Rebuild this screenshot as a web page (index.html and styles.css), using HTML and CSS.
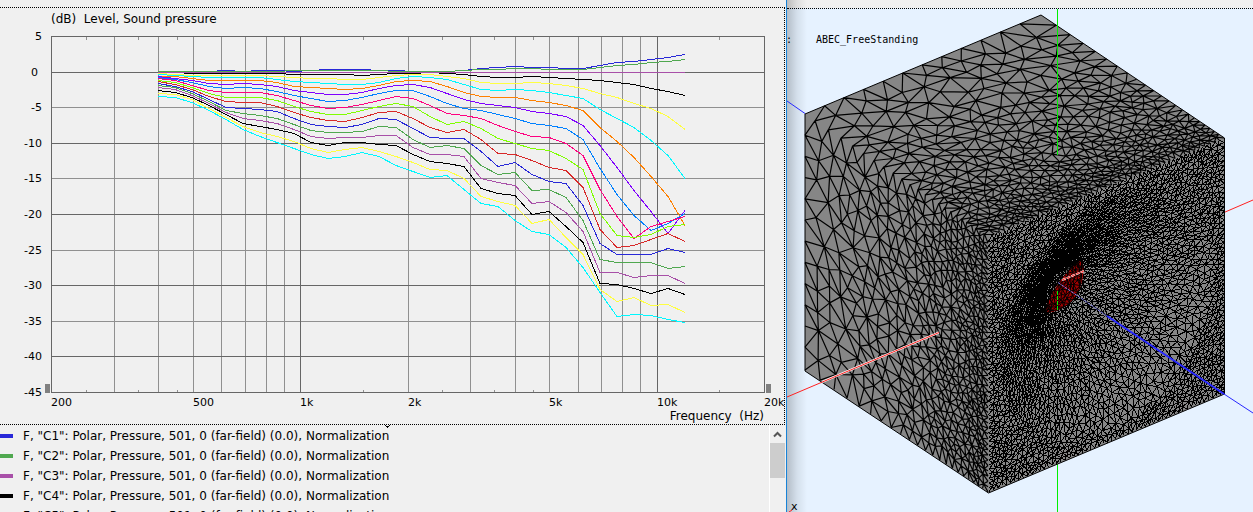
FILE: index.html
```html
<!DOCTYPE html>
<html lang="en">
<head>
<meta charset="utf-8">
<title>Level, Sound pressure</title>
<link rel="stylesheet" href="styles.css">
</head>
<body>
<main class="workspace">
  <section class="spectrum" aria-label="Level, Sound pressure">
    <div class="chart-panel">
      <svg class="chart" viewBox="0 8 784 416" role="img" aria-label="Sound pressure level over frequency">
        <g id="grid" class="grid"></g>
        <g id="curves" class="curves"></g>
        <rect class="handle" x="45" y="384" width="5" height="9"/>
        <rect class="handle" x="766" y="384" width="5" height="9"/>
        <text class="title" x="51" y="23" xml:space="preserve">(dB)  Level, Sound pressure</text>
        <g id="labels"></g>
        <text class="title end" x="764" y="420" xml:space="preserve">Frequency  (Hz)</text>
      </svg>
    </div>
    <div class="legend">
      <ul class="legend-list">
        <li><span class="swatch blue"></span>F, "C1": Polar, Pressure, 501, 0 (far-field) (0.0), Normalization</li>
        <li><span class="swatch green"></span>F, "C2": Polar, Pressure, 501, 0 (far-field) (0.0), Normalization</li>
        <li><span class="swatch purple"></span>F, "C3": Polar, Pressure, 501, 0 (far-field) (0.0), Normalization</li>
        <li><span class="swatch black"></span>F, "C4": Polar, Pressure, 501, 0 (far-field) (0.0), Normalization</li>
        <li><span class="swatch yellow"></span>F, "C5": Polar, Pressure, 501, 0 (far-field) (0.0), Normalization</li>
      </ul>
      <div class="scrollbar">
        <button class="scroll-up" type="button" aria-label="Scroll up">
          <svg width="9" height="7" viewBox="0 0 9 7"><path d="M1 5.5 4.5 2 8 5.5" fill="none" stroke="#555" stroke-width="2"/></svg>
        </button>
        <div class="thumb"></div>
      </div>
      <svg class="splitter-mark" width="5" height="3" viewBox="0 0 5 3"><path d="M0 0h1v1h3V0h1v1H4v1H3v1H2V2H1V1H0z"/></svg>
    </div>
  </section>
  <section class="viewport" aria-label="ABEC_FreeStanding">
    <svg class="scene" viewBox="787 9 466 503" preserveAspectRatio="xMinYMin meet" role="img" aria-label="Boundary element mesh">
      <path class="axis-z" d="M787 101 805 113.500"/>
      <path class="axis-x" d="M1224 212.500 1253 200"/>
      <path class="axis-y" d="M1057.500 464V512"/>
      <path class="solid" d="M1041 15 1224.500 138V394L988.500 493 805 371V114Z"/>
      <g id="mesh" class="mesh"></g>
      <path class="driver" d="M1045 313C1048 294 1066 270 1082 259 1087 280 1078 310 1045 313Z"/>
      <path id="driver-mesh" class="driver-mesh"/>
      <path class="outline" d="M1041 15 1224.500 138V394L988.500 493 805 371V114Z"/>
      <path class="axis-glow" d="M822 382 939 332.500"/>
      <path class="axis-x" d="M787 397 939 332.500"/>
      <path class="axis-glow dashed" d="M1062 280 1084 271"/>
      <path class="axis-x dashed" d="M1062 280 1084 271"/>
      <path class="axis-y" d="M1057.500 9V155"/>
      <path class="axis-y dashed" d="M1057.500 291V310"/>
      <path class="axis-z faint" d="M1058 282.500 1107 316"/>
      <path class="axis-z wide" d="M1107 316 1224 394"/>
      <path class="axis-z" d="M1224 394 1253 413"/>
      <path class="axis-x" d="M789 512 792 510"/>
      <text class="mono" x="786" y="43">:</text>
      <text class="mono" x="816" y="43">ABEC_FreeStanding</text>
      <text class="axis-name" x="791" y="510">x</text>
    </svg>
  </section>
</main>
<script src="plot.js"></script>
</body>
</html>
```

FILE: styles.css
```css
* { box-sizing: border-box; }

body {
  margin: 0;
  background: #f0f0f0;
  color: #000;
  font: 12px/20px "DejaVu Sans", Verdana, sans-serif;
}

.workspace {
  display: grid;
  grid-template-columns: minmax(0, 787fr) minmax(0, 466fr);
  height: 100vh;
  overflow: hidden;
}

.spectrum {
  display: flex;
  flex-direction: column;
  min-height: 0;
  padding-top: 7px;
  border-right: 1px solid #1883d7;
}

.chart-panel {
  flex: none;
  margin-right: 1px;
  border: 1px dotted #000;
  border-left: 0;
}

.chart {
  display: block;
  width: 100%;
}

.chart text { font-size: 11px; }
.chart .title { font-size: 12px; }
.chart .end { text-anchor: end; }

.grid,
.curves,
.handle { shape-rendering: crispEdges; }

.grid path { fill: none; stroke: #909090; }
.grid .major { stroke: #666; }
.curves polyline { fill: none; }
.handle { fill: #808080; }

.legend {
  position: relative;
  display: flex;
  flex: 1;
  min-height: 0;
  overflow: hidden;
}

.legend-list {
  flex: 1;
  margin: 0;
  padding: 1px 0 0;
  list-style: none;
  white-space: nowrap;
}

.legend-list li {
  display: flex;
  align-items: center;
  gap: 10px;
  height: 20px;
}

.swatch {
  width: 13px;
  height: 4px;
}

.blue { background: #2828d8; }
.green { background: #50a850; }
.purple { background: #a850a8; }
.black { background: #000; }
.yellow { background: #ffff40; }

.scrollbar {
  width: 17px;
  padding-right: 1px;
  border-left: 1px solid #fff;
}

.scroll-up {
  display: flex;
  align-items: center;
  justify-content: center;
  width: 100%;
  height: 18px;
  padding: 0;
  border: 0;
  background: transparent;
}

.thumb {
  height: 35px;
  background: #cdcdcd;
}

.splitter-mark {
  position: absolute;
  top: 0;
  left: 49%;
}

.viewport {
  position: relative;
  padding-top: 8px;
  background: linear-gradient(#f0f0f0 8px, #e6f2ff 8px);
}

.viewport::before {
  content: "";
  position: absolute;
  inset: 0 auto 0 0;
  width: 20px;
  background: linear-gradient(to right, rgba(0, 0, 0, .22), rgba(0, 0, 0, .08) 50%, rgba(0, 0, 0, 0));
}

.scene {
  position: relative;
  display: block;
  width: 100%;
  border-top: 1px dotted #000;
}

.solid { fill: #868686; }
.outline { fill: none; stroke: #000; }
.mesh path { fill: none; stroke: #000; }
.mesh .hull { stroke-width: 1.2; }
.mesh .front { shape-rendering: crispEdges; }
.driver { fill: #a00000; }
.driver-mesh { fill: none; stroke: #000; }
.axis-x { fill: none; stroke: #ff2020; }
.axis-y { fill: none; stroke: #00f000; shape-rendering: crispEdges; }
.axis-z { fill: none; stroke: #2828ff; }
.wide { stroke-width: 2; }
.faint { stroke: #8080f0; stroke-dasharray: 3 1; }
.axis-glow { stroke: #fff; stroke-width: 2; }
.dashed { stroke-dasharray: 4 1; }
.mono { font: 10px "DejaVu Sans Mono", monospace; }
.axis-name { font: 11px "DejaVu Sans", sans-serif; }
```

FILE: plot.js
```js
const NS = 'http://www.w3.org/2000/svg';

function add(parent, name, attrs, text) {
  const node = document.createElementNS(NS, name);
  for (const key in attrs) node.setAttribute(key, attrs[key]);
  if (text !== undefined) node.textContent = text;
  parent.appendChild(node);
  return node;
}

/* ---------- level chart ---------- */

const grid = document.getElementById('grid');
const labels = document.getElementById('labels');
const LEFT = 51.5, RIGHT = 764.5, TOP = 36.5, BOTTOM = 392.5;
const fx = f => Math.floor(LEFT + (RIGHT - LEFT) * Math.log10(f / 200) / 2) + 0.5;
const ly = db => Math.floor(TOP + (5 - db) * (BOTTOM - TOP) / 50) + 0.5;

for (const f of [300, 400, 500, 600, 700, 800, 900, 2000, 3000, 4000, 5000, 6000, 7000, 8000, 9000])
  add(grid, 'path', { d: `M${fx(f)} ${TOP}V${BOTTOM}` });
for (const f of [250, 350, 450, 1500, 2500, 3500, 4500, 15000])
  add(grid, 'path', { d: `M${fx(f)} ${TOP}v3M${fx(f)} ${BOTTOM}v-3` });
for (let db = -5; db > -45; db -= 10)
  add(grid, 'path', { d: `M${LEFT} ${ly(db)}H${RIGHT}` });
for (let db = 0; db > -45; db -= 10)
  add(grid, 'path', { class: 'major', d: `M${LEFT} ${ly(db)}H${RIGHT}` });
for (const f of [1000, 10000])
  add(grid, 'path', { class: 'major', d: `M${fx(f)} ${TOP}V${BOTTOM}` });
add(grid, 'path', { class: 'major', d: `M${LEFT} ${TOP}H${RIGHT}V${BOTTOM}H${LEFT}Z` });

for (let db = 5; db >= -45; db -= 5)
  add(labels, 'text', { class: 'end', x: db === 0 ? 38 : 42, y: ly(db) + 3.5 }, db);
for (const [f, name] of [[200, '200'], [500, '500'], [1000, '1k'], [2000, '2k'], [5000, '5k'], [10000, '10k'], [20000, '20k']])
  add(labels, 'text', { x: fx(f) - 0.5, y: 406 }, name);

const BLUE = '#2828d8', GREEN = '#50a850', PURPLE = '#a850a8', BLACK = '#000', YELLOW = '#ffff40', CYAN = '#00f8ff';
const series = [
  [BLUE, [71, 71, 71, 71, 70, 71, 70, 70, 71, 70, 69, 69, 69, 70, 70, 71, 71, 71, 70, 68, 67, 66, 67, 67, 68, 68, 65, 62, 61, 59, 57, 54]],
  [BLACK, [72, 72, 73, 73, 73, 73, 73, 73, 74, 74, 74, 74, 75, 74, 73, 73, 72, 73, 74, 76, 77, 77, 76, 77, 78, 79, 80, 82, 84, 88, 91, 95]],
  [PURPLE, [72, 72, 72, 72, 72, 72, 72, 72, 72, 72, 72, 72, 72, 72, 72, 72, 72, 72, 72, 72, 72, 72, 72, 72, 72, 72, 72, 72, 72, 72, 72, 72]],
  [GREEN, [71, 71, 71, 71, 71, 71, 71, 71, 70, 70, 70, 70, 70, 70, 71, 71, 71, 71, 70, 69, 69, 68, 68, 69, 69, 69, 67, 65, 64, 62, 61, 59]],
  [YELLOW, [73, 74, 75, 75, 75, 75, 75, 76, 77, 78, 78, 79, 79, 77, 75, 74, 74, 76, 78, 82, 83, 83, 82, 83, 85, 88, 93, 97, 103, 108, 116, 129]],
  [CYAN, [74, 75, 76, 77, 77, 77, 77, 79, 81, 82, 83, 84, 84, 82, 78, 76, 77, 79, 84, 89, 90, 89, 90, 92, 95, 98, 109, 118, 127, 140, 155, 178]],
  ['#ff8000', [76, 76, 78, 80, 80, 80, 80, 82, 86, 87, 88, 89, 88, 85, 81, 80, 81, 86, 92, 96, 97, 97, 100, 102, 105, 110, 127, 141, 157, 176, 196, 225]],
  ['#8000ff', [76, 78, 80, 83, 84, 83, 84, 86, 90, 92, 94, 94, 92, 88, 85, 84, 87, 93, 99, 103, 105, 107, 111, 113, 116, 125, 145, 167, 190, 211, 233, 210]],
  ['#0080ff', [77, 79, 82, 86, 88, 87, 88, 91, 95, 98, 101, 100, 97, 93, 90, 90, 96, 103, 108, 110, 114, 118, 123, 125, 128, 139, 168, 194, 215, 230, 223, 213]],
  ['#ff0080', [78, 80, 85, 90, 92, 92, 92, 95, 100, 105, 108, 107, 104, 100, 96, 98, 105, 113, 115, 118, 125, 131, 136, 137, 143, 155, 189, 216, 238, 226, 221, 216]],
  ['#80ff00', [80, 82, 87, 93, 97, 97, 97, 100, 106, 111, 114, 114, 110, 106, 103, 106, 116, 124, 121, 128, 138, 143, 148, 150, 158, 169, 213, 235, 237, 234, 226, 224]],
  ['#d82828', [81, 84, 89, 96, 101, 102, 102, 106, 112, 117, 120, 121, 117, 112, 111, 118, 127, 132, 129, 139, 153, 154, 160, 167, 170, 187, 229, 247, 245, 239, 233, 241]],
  [BLUE, [83, 86, 91, 99, 107, 108, 109, 111, 118, 124, 126, 127, 124, 118, 119, 128, 137, 138, 138, 151, 166, 162, 174, 181, 183, 205, 243, 254, 254, 254, 248, 252]],
  [GREEN, [85, 87, 93, 101, 110, 113, 115, 118, 124, 130, 132, 132, 131, 126, 127, 139, 147, 145, 148, 165, 174, 172, 190, 189, 197, 220, 259, 262, 262, 262, 268, 266]],
  [PURPLE, [87, 89, 95, 103, 112, 118, 120, 123, 129, 136, 138, 137, 137, 135, 135, 147, 154, 154, 156, 178, 182, 185, 203, 201, 212, 231, 272, 272, 277, 275, 275, 283]],
  [BLACK, [90, 92, 97, 105, 114, 123, 126, 129, 133, 142, 145, 142, 142, 144, 145, 154, 161, 163, 166, 188, 193, 195, 214, 211, 226, 242, 283, 284, 288, 293, 288, 294]],
  [YELLOW, [93, 94, 99, 108, 117, 126, 132, 136, 141, 148, 152, 149, 147, 151, 156, 162, 169, 170, 178, 196, 201, 205, 223, 219, 237, 254, 289, 301, 297, 305, 304, 312]],
  [CYAN, [96, 97, 102, 110, 119, 129, 136, 142, 148, 154, 158, 156, 152, 156, 165, 171, 177, 175, 189, 203, 206, 220, 231, 234, 247, 267, 292, 316, 314, 315, 319, 322]]
];
const curves = document.getElementById('curves');
for (const [color, ys] of series)
  add(curves, 'polyline', {
    stroke: color,
    points: ys.map((y, i) => `${158 + i * 17},${y + 0.5}`).join(' ')
  });

/* ---------- element mesh ---------- */

let seed = 7;
function random() {
  seed = (seed * 1664525 + 1013904223) >>> 0;
  return seed / 4294967296;
}

/* Points of the unit square whose spacing follows size(u, v). */
function scatter(size, tries) {
  const cell = 0.02, n = 52, bins = new Map(), pts = [];
  const put = (u, v) => {
    const key = Math.floor(u / cell) * n + Math.floor(v / cell);
    if (!bins.has(key)) bins.set(key, []);
    bins.get(key).push([u, v]);
    pts.push([u + (random() - 0.5) * 2e-4, v + (random() - 0.5) * 2e-4]);
  };
  const along = at => {
    let t = 0;
    while (t < 1) {
      put(...at(t));
      t += size(...at(t)) * 1.15;
      if (1 - t < size(...at(1)) * 0.6) break;
    }
  };
  along(t => [t, 0]);
  along(t => [1, t]);
  along(t => [1 - t, 1]);
  along(t => [0, 1 - t]);
  for (let k = 0; k < tries; k++) {
    const u = random(), v = random(), h = size(u, v);
    const reach = Math.ceil(h / cell), cu = Math.floor(u / cell), cv = Math.floor(v / cell);
    let free = true;
    for (let a = cu - reach; a <= cu + reach && free; a++)
      for (let b = cv - reach; b <= cv + reach && free; b++)
        for (const q of bins.get(a * n + b) || [])
          if ((q[0] - u) ** 2 + (q[1] - v) ** 2 < h * h) { free = false; break; }
    if (free) put(u, v);
  }
  return pts;
}

/* Sweep-line Delaunay triangulation; returns the unique edges. */
function edgesOf(points) {
  const p = points.slice().sort((a, b) => a[0] - b[0]);
  const n = p.length;
  p.push([-30, -20], [0.5, 40], [31, -20]);
  const circle = (a, b, c) => {
    const [ax, ay] = p[a], bx = p[b][0] - ax, by = p[b][1] - ay, cx = p[c][0] - ax, cy = p[c][1] - ay;
    const d = 2 * (bx * cy - by * cx) || 1e-14, bb = bx * bx + by * by, cc = cx * cx + cy * cy;
    const x = (cy * bb - by * cc) / d, y = (bx * cc - cx * bb) / d;
    return { t: [a, b, c], x: ax + x, y: ay + y, r: x * x + y * y };
  };
  let open = [circle(n, n + 1, n + 2)];
  const done = [];
  for (let i = 0; i < n; i++) {
    const rim = new Map(), keep = [];
    for (const c of open) {
      const dx = p[i][0] - c.x, dy = p[i][1] - c.y;
      if (dx > 0 && dx * dx > c.r) done.push(c);
      else if (dx * dx + dy * dy > c.r) keep.push(c);
      else for (const [a, b] of [[c.t[0], c.t[1]], [c.t[1], c.t[2]], [c.t[2], c.t[0]]]) {
        const key = Math.min(a, b) * 100000 + Math.max(a, b);
        if (rim.has(key)) rim.delete(key); else rim.set(key, [a, b]);
      }
    }
    for (const [a, b] of rim.values()) keep.push(circle(a, b, i));
    open = keep;
  }
  const edges = new Map();
  for (const { t } of done.concat(open))
    for (const [a, b] of [[t[0], t[1]], [t[1], t[2]], [t[2], t[0]]])
      if (a < n && b < n) edges.set(Math.min(a, b) * 100000 + Math.max(a, b), [p[a], p[b]]);
  return [...edges.values()];
}

/* Face borders carry no line of their own, so neighbouring faces blend. */
const inner = edges => edges.filter(([a, b]) =>
  ![0, 1].some(k => (a[k] < 0.001 && b[k] < 0.001) || (a[k] > 0.999 && b[k] > 0.999)));

const project = (o, U, V) => ([u, v]) =>
  `${(o[0] + u * U[0] + v * V[0]).toFixed(1)} ${(o[1] + u * U[1] + v * V[1]).toFixed(1)}`;
const pathOf = (edges, map) => edges.map(([a, b]) => `M${map(a)}L${map(b)}`).join('');

const mesh = document.getElementById('mesh');
const wall = (u, v) => 0.072 - 0.054 * Math.pow(v, 0.9);

add(mesh, 'path', { class: 'hull', d: pathOf(inner(edgesOf(scatter(wall, 30000))), project([805, 114], [236, -99], [183, 123])) });
add(mesh, 'path', { class: 'hull', d: pathOf(inner(edgesOf(scatter(wall, 30000))), project([805, 114], [0, 256], [183, 122])) });

/* Front baffle with the horn recessed towards the driver. */
const radius = (u, v) => Math.hypot(u - 0.5, v - 0.5);
const baffle = (u, v) => {
  const r = radius(u, v);
  if (r < 0.1) return 0.011;
  if (r > 0.46) return 0.0155;
  const lower = Math.max(0, ((u - 0.5) * 0.5 + (v - 0.5) * 0.85) / r) * Math.max(0, r - 0.24);
  return 0.0105 + 0.0045 * Math.min(1, (r - 0.1) / 0.2) + 0.032 * lower;
};
const horn = ([u, v]) => {
  const r = radius(u, v);
  const depth = r > 0.46 ? 0 : 0.225 * Math.pow(1 - Math.max(0, r - 0.08) / 0.38, 1.3);
  return `${(988 + u * 236 + v - depth * 183).toFixed(1)} ${(237 - u * 99 + v * 255 - depth * 123).toFixed(1)}`;
};
add(mesh, 'path', { class: 'front', d: pathOf(inner(edgesOf(scatter(baffle, 70000))), horn) });

/* Driver cells stay inside the lens-shaped opening. */
const cells = scatter(() => 0.09, 5000).map(([u, v]) => {
  const bulge = Math.sin(Math.PI * u), s = v - 0.35;
  return [1045 + 37 * u + 18 * bulge * s, 313 - 54 * u + 18 * bulge * s];
});
document.getElementById('driver-mesh').setAttribute('d',
  pathOf(edgesOf(cells.map(([x, y]) => [(x - 1040) / 60, (y - 250) / 80])).filter(([a, b]) => Math.hypot(a[0] - b[0], a[1] - b[1]) < 0.12),
    project([1040, 250], [60, 0], [0, 80])));
```
